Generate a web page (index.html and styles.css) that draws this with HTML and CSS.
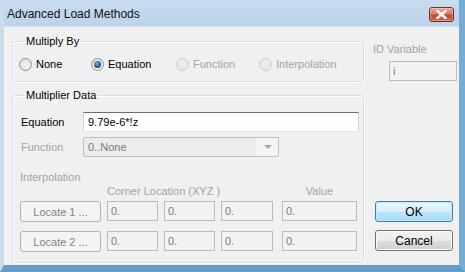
FILE: index.html
```html
<!DOCTYPE html>
<html lang="en">
<head>
    <meta charset="UTF-8">
    <title>Advanced Load Methods</title>
    <link rel="stylesheet" href="styles.css">
</head>
<body>
    <div class="window">
        <div class="titlebar">
            <span class="title">Advanced Load Methods</span>
            <span class="close">
                <svg width="11" height="9" viewBox="0 0 11 9"><path d="M1.5 1 L9.5 8 M9.5 1 L1.5 8" stroke="#fff" stroke-width="2.4" stroke-linecap="square"/></svg>
            </span>
        </div>

        <div class="client">
            <div class="left">
                <!-- Multiply By -->
                <fieldset class="group multiply">
                    <legend>Multiply By</legend>
                    <div class="radios">
                        <label class="radio"><span class="dot"></span>None</label>
                        <label class="radio"><span class="dot checked"></span>Equation</label>
                        <label class="radio disabled"><span class="dot"></span>Function</label>
                        <label class="radio disabled"><span class="dot"></span>Interpolation</label>
                    </div>
                </fieldset>

                <!-- Multiplier Data -->
                <fieldset class="group data">
                    <legend>Multiplier Data</legend>
                    <div class="field-row first">
                        <span class="field-label">Equation</span>
                        <div class="textbox eq">9.79e-6*!z</div>
                    </div>
                    <div class="field-row">
                        <span class="field-label disabled">Function</span>
                        <div class="combo">
                            <span>0..None</span>
                            <span class="arrow"></span>
                        </div>
                    </div>
                    <div class="interp-label disabled">Interpolation</div>
                    <div class="loc-grid">
                        <span></span>
                        <span class="col-head corner disabled">Corner Location (XYZ )</span>
                        <span class="col-head value disabled">Value</span>

                        <div class="btn locate">Locate 1 ...</div>
                        <div class="textbox off">0.</div>
                        <div class="textbox off">0.</div>
                        <div class="textbox off">0.</div>
                        <div class="textbox off val">0.</div>

                        <div class="btn locate">Locate 2 ...</div>
                        <div class="textbox off">0.</div>
                        <div class="textbox off">0.</div>
                        <div class="textbox off">0.</div>
                        <div class="textbox off val">0.</div>
                    </div>
                </fieldset>
            </div>

            <div class="right">
                <div class="id-label disabled">ID Variable</div>
                <div class="textbox off id-box">i</div>
                <div class="buttons">
                    <div class="btn ok">OK</div>
                    <div class="btn cancel">Cancel</div>
                </div>
            </div>
        </div>
    </div>
</body>
</html>
```

FILE: styles.css
```css
body {
    margin: 0;
    font-family: "Liberation Sans", Arial, sans-serif;
    font-size: 11px;
    color: #000;
    background: #6a9fcb;
}
.window {
    width: 465px;
    height: 272px;
    box-sizing: border-box;
    display: flex;
    flex-direction: column;
    background: #c3d8ed;
    border-right: 6px solid #74acd5;
    border-bottom: 7px solid #629cc9;
    border-left: 4px solid #cadcee;
}
.titlebar {
    height: 26px;
    display: flex;
    align-items: center;
    justify-content: space-between;
    background: linear-gradient(#c9dcef, #bcd3ea);
    border-bottom: 1px solid #d9e5f1;
}
.title {
    font-size: 12px;
    margin-left: 3px;
    margin-top: 1px;
    color: #111;
}
.close {
    width: 25px;
    height: 15px;
    margin-right: 5px;
    margin-top: 2px;
    box-sizing: border-box;
    border: 1px solid #6b2d2a;
    border-radius: 3px;
    display: flex;
    align-items: center;
    justify-content: center;
    background: linear-gradient(#e8a798, #d57a6a 45%, #c3452f 55%, #cf6a4d);
    box-shadow: inset 0 0 0 1px rgba(255, 255, 255, 0.35);
}
.client {
    flex: 1;
    display: flex;
    background: #f0f0f0;
}
.left {
    width: 352px;
    margin-left: 8px;
}
.disabled {
    color: #a3a3a3;
}

/* group boxes */
.group {
    margin: 0;
    padding: 0 0 0 7px;
    border: 1px solid #d5dfe5;
    border-radius: 3px;
    box-shadow: inset 1px 1px 0 #fff, 1px 1px 0 #fff;
}
.group legend {
    padding: 0 2px;
    margin-left: 4px;
    line-height: 13px;
}
.multiply {
    margin-top: 8px;
    height: 47px;
    box-sizing: border-box;
}
.data {
    margin-top: 7px;
    height: 174px;
    box-sizing: border-box;
}

/* radios */
.radios {
    display: grid;
    grid-template-columns: 72px 85px 83px auto;
    margin-top: 10px;
    margin-left: -1px;
}
.radio {
    display: flex;
    align-items: center;
    gap: 4px;
    line-height: 13px;
}
.dot {
    width: 13px;
    height: 13px;
    box-sizing: border-box;
    border-radius: 50%;
    border: 1px solid #8f9293;
    background: radial-gradient(circle at 60% 60%, #f4f4f4, #d8d8d8);
    display: flex;
    align-items: center;
    justify-content: center;
}
.dot.checked::after {
    content: "";
    width: 7px;
    height: 7px;
    border-radius: 50%;
    background: radial-gradient(circle at 40% 35%, #6fb1e6, #1a5a94 60%, #0c3c6c);
}
.radio.disabled .dot {
    border-color: #cacaca;
    background: #eaeaea;
}

/* text boxes */
.textbox {
    height: 20px;
    box-sizing: border-box;
    padding: 0 4px;
    line-height: 18px;
    background: #fff;
    border: 1px solid #c9d6e0;
    border-top-color: #5f7381;
    border-bottom-color: #e3e9ef;
}
.textbox.off {
    background: #f2f2f2;
    color: #7a7a7a;
    border: 1px solid #bcbcbc;
    padding-left: 3px;
}
.field-row {
    display: flex;
    align-items: center;
    margin-top: 5px;
}
.field-row.first {
    margin-top: 10px;
}
.field-label {
    width: 62px;
    padding-left: 1px;
}
.eq {
    width: 276px;
}
.combo {
    width: 196px;
    height: 20px;
    box-sizing: border-box;
    display: flex;
    align-items: center;
    justify-content: space-between;
    padding-left: 4px;
    color: #7a7a7a;
    background: linear-gradient(90deg, #ececec 172px, #f4f4f4 172px);
    border: 1px solid #c0c0c0;
    border-radius: 2px;
}
.arrow {
    width: 0;
    height: 0;
    margin-right: 6px;
    border-left: 4px solid transparent;
    border-right: 4px solid transparent;
    border-top: 4px solid #a8a8a8;
}
.interp-label {
    margin-top: 14px;
    line-height: 13px;
}

/* locate grid */
.loc-grid {
    display: grid;
    grid-template-columns: 81px 51px 51px 52px 78px;
    column-gap: 6px;
    row-gap: 9px;
    margin-top: 1px;
}
.col-head {
    line-height: 13px;
    margin-bottom: -6px;
}
.corner {
    grid-column: 2 / span 3;
}
.value {
    text-align: center;
    padding-left: 3px;
}
.loc-grid .val {
    margin-left: 3px;
}

/* buttons */
.btn {
    height: 21px;
    box-sizing: border-box;
    border-radius: 3px;
    display: flex;
    align-items: center;
    justify-content: center;
}
.locate {
    color: #838383;
    background: #f4f4f4;
    border: 1px solid #adb2b5;
}
.right {
    flex: 1;
    display: flex;
    flex-direction: column;
}
.id-label {
    margin-top: 16px;
    margin-left: 9px;
    line-height: 13px;
}
.id-box {
    width: 68px;
    margin-top: 5px;
    margin-left: 25px;
}
.buttons {
    margin-top: 120px;
    margin-left: 11px;
    width: 78px;
    display: flex;
    flex-direction: column;
    gap: 8px;
    font-size: 12px;
}
.ok {
    border: 1px solid #3c7fb1;
    background: linear-gradient(#e9f6fd, #d9f0fc 50%, #bee6fd 50%, #a7d9f5);
    box-shadow: inset 0 0 0 1px #c4e8fb;
}
.cancel {
    border: 1px solid #707070;
    background: linear-gradient(#f2f2f2, #ebebeb 50%, #dddddd 50%, #cfcfcf);
    box-shadow: inset 0 0 0 1px #fbfbfb;
}
```
